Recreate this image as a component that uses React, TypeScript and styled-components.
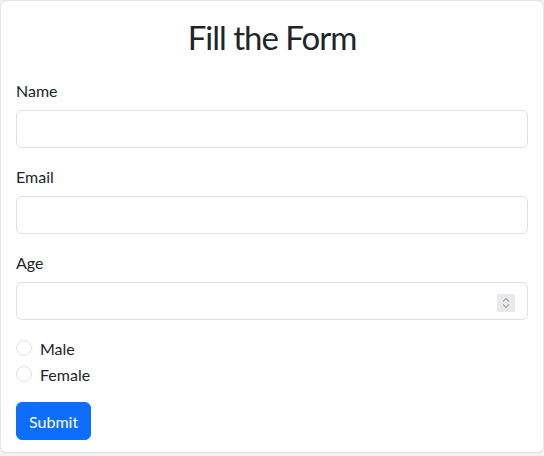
import React from 'react'
import styled, { createGlobalStyle } from 'styled-components'

const GlobalStyle = createGlobalStyle`
    * {
        box-sizing: border-box;
    }
    body {
        margin: 0;
        background: #f1f1f1;
        font-family: "Segoe UI", Lato, "Liberation Sans", sans-serif;
        color: #212529;
    }
`

const Card = styled.div`
    background: #fff;
    border: 1px solid rgba(0, 0, 0, 0.1);
    border-radius: 7px;
    padding: 15px 15px 12px;
    width: 544px;
`

const Title = styled.h2`
    margin: 0 0 20px;
    padding-top: 1px;
    height: 42px;
    font-size: 33px;
    font-weight: 400;
    letter-spacing: -1px;
    line-height: 41px;
    text-align: center;
`

const Field = styled.div`
    position: relative;
    margin-bottom: 16px;
`

const Label = styled.label`
    display: block;
    margin-bottom: 8px;
    padding-top: 2px;
    font-size: 16px;
    line-height: 22px;
`

const Input = styled.input`
    display: block;
    width: 100%;
    height: 38px;
    padding: 6px 12px;
    font: inherit;
    font-size: 16px;
    color: #212529;
    background: #fff;
    border: 1px solid #dee2e6;
    border-radius: 6px;
    outline: none;
    -moz-appearance: textfield;

    &::-webkit-inner-spin-button,
    &::-webkit-outer-spin-button {
        -webkit-appearance: none;
        margin: 0;
    }
`

const Spinner = styled.span`
    position: absolute;
    right: 13px;
    bottom: 8px;
    width: 18px;
    height: 18px;
    display: flex;
    align-items: center;
    justify-content: center;
    background: #e9e9ed;
    border-radius: 1px;
    pointer-events: none;
`

const Check = styled.div`
    display: flex;
    align-items: center;
    gap: 8px;
    min-height: 24px;
    margin-bottom: 2px;
`

const Radio = styled.input`
    appearance: none;
    width: 16px;
    height: 16px;
    margin: 0;
    border: 1px solid #dee2e6;
    border-radius: 50%;
    background: #fff;
`

const CheckLabel = styled.label`
    padding-top: 2px;
    font-size: 16px;
    line-height: 22px;
`

const SubmitButton = styled.button`
    margin-top: 14px;
    height: 38px;
    padding: 7px 12px 5px;
    font: inherit;
    font-size: 16px;
    line-height: 24px;
    color: #fff;
    background: #0d6efd;
    border: 1px solid #0d6efd;
    border-radius: 6px;
`

export default function App() {
    return (
        <>
            <GlobalStyle />
            <Card>
                <Title>Fill the Form</Title>
                <Field>
                    <Label htmlFor="name">Name</Label>
                    <Input id="name" type="text" />
                </Field>
                <Field>
                    <Label htmlFor="email">Email</Label>
                    <Input id="email" type="email" />
                </Field>
                <Field>
                    <Label htmlFor="age">Age</Label>
                    <Input id="age" type="number" />
                    <Spinner>
                        <svg width="10" height="14" viewBox="0 0 10 14" fill="none" stroke="#a0a0ab" strokeWidth="1.1">
                            <path d="M2 5.5 L5 2.5 L8 5.5" />
                            <path d="M2 8.5 L5 11.5 L8 8.5" />
                        </svg>
                    </Spinner>
                </Field>
                <Check>
                    <Radio id="male" type="radio" name="gender" />
                    <CheckLabel htmlFor="male">Male</CheckLabel>
                </Check>
                <Check>
                    <Radio id="female" type="radio" name="gender" />
                    <CheckLabel htmlFor="female">Female</CheckLabel>
                </Check>
                <SubmitButton type="submit">Submit</SubmitButton>
            </Card>
        </>
    )
}
